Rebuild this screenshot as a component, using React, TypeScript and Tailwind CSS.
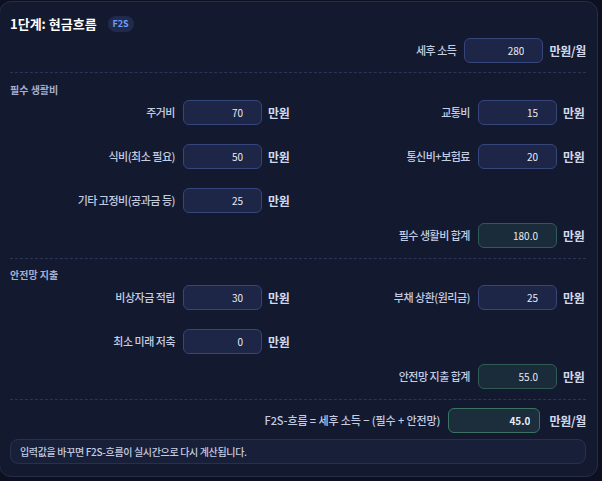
import { useState } from 'react';

type Tone = 'input' | 'total' | 'result';

interface FieldProps {
  label: string;
  value: string;
  unit?: string;
  tone?: Tone;
  onChange?: (v: string) => void;
}

const toneClass: Record<Tone, string> = {
  input: 'w-[79px] border-[#36457a] bg-[#1d2647] pr-[18px] font-normal',
  total: 'w-[79px] border-[#2e5c55] bg-[#1a2b39] pr-[18px] font-normal',
  result: 'w-[92px] border-[#3a7364] bg-[#1c2e3c] pr-[9px] font-bold',
};

function Field({ label, value, unit = '만원', tone = 'input', onChange }: FieldProps) {
  const isResult = tone === 'result';
  return (
    <div className="flex h-[25px] items-center justify-end">
      <span
        className={`mr-[8px] text-[11px] font-medium text-[#c4cce2] ${isResult ? 'tracking-[-0.1px]' : 'tracking-[-0.5px]'}`}
      >
        {label}
      </span>
      <input
        value={value}
        readOnly={tone !== 'input'}
        onChange={(e) => onChange?.(e.target.value)}
        className={`h-[25px] rounded-[6px] border text-right text-[10px] text-[#e8ecf6] outline-none ${toneClass[tone]}`}
      />
      <span
        className={`min-w-[23px] text-[12px] font-bold tracking-[-0.3px] text-[#d3d9ec] ${isResult ? 'ml-[9px]' : 'ml-[6px]'}`}
      >
        {unit}
      </span>
    </div>
  );
}

function SectionTitle({ children }: { children: string }) {
  return <div className="h-[15px] text-[10px] leading-[15px] font-bold text-[#a4afd3]">{children}</div>;
}

function Divider() {
  return <div className="border-t border-dashed border-[#2c3556]" />;
}

export default function App() {
  const [v, setV] = useState({
    income: '280',
    housing: '70',
    transport: '15',
    food: '50',
    telecom: '20',
    fixed: '25',
    emergency: '30',
    debt: '25',
    saving: '0',
  });
  const set = (k: keyof typeof v) => (x: string) => setV((p) => ({ ...p, [k]: x }));
  const n = (x: string) => Number(x) || 0;

  const essential = n(v.housing) + n(v.transport) + n(v.food) + n(v.telecom) + n(v.fixed);
  const safety = n(v.emergency) + n(v.debt) + n(v.saving);
  const f2s = n(v.income) - (essential + safety);

  return (
    <div className="min-h-screen bg-[#0c1020] pt-px font-['Noto_Sans_CJK_KR','Noto_Sans',sans-serif]">
      <div className="-ml-px w-[599px] rounded-[12px] border border-[#252d48] bg-[#131a30] pt-[12px] pb-[12px] pl-[10px] pr-[11px]">
        <div className="flex h-[20px] items-center gap-[11px]">
          <h1 className="text-[13px] font-bold text-white">1단계: 현금흐름</h1>
          <span className="flex h-[16px] w-[26px] items-center justify-center rounded-full bg-[#1f2a4c] text-[9px] font-bold text-[#6e9cff]">
            F2S
          </span>
        </div>

        <div className="mt-[4px]">
          <Field label="세후 소득" value={v.income} unit="만원/월" onChange={set('income')} />
        </div>

        <div className="mt-[9px]">
          <Divider />
        </div>

        <div className="pt-[9px]">
          <SectionTitle>필수 생활비</SectionTitle>
          <div className="mt-[3px] grid grid-cols-2 gap-x-[14px] gap-y-[19px]">
            <Field label="주거비" value={v.housing} onChange={set('housing')} />
            <Field label="교통비" value={v.transport} onChange={set('transport')} />
            <Field label="식비(최소 필요)" value={v.food} onChange={set('food')} />
            <Field label="통신비+보험료" value={v.telecom} onChange={set('telecom')} />
            <Field label="기타 고정비(공과금 등)" value={v.fixed} onChange={set('fixed')} />
          </div>
          <div className="mt-[10px]">
            <Field label="필수 생활비 합계" value={essential.toFixed(1)} tone="total" />
          </div>
        </div>

        <div className="mt-[10px]">
          <Divider />
        </div>

        <div className="pt-[8px]">
          <SectionTitle>안전망 지출</SectionTitle>
          <div className="mt-[3px] grid grid-cols-2 gap-x-[14px] gap-y-[19px]">
            <Field label="비상자금 적립" value={v.emergency} onChange={set('emergency')} />
            <Field label="부채 상환(원리금)" value={v.debt} onChange={set('debt')} />
            <Field label="최소 미래 저축" value={v.saving} onChange={set('saving')} />
          </div>
          <div className="mt-[10px]">
            <Field label="안전망 지출 합계" value={safety.toFixed(1)} tone="total" />
          </div>
        </div>

        <div className="mt-[10px]">
          <Divider />
        </div>

        <div className="mt-[8px]">
          <Field label="F2S-흐름 = 세후 소득 − (필수 + 안전망)" value={f2s.toFixed(1)} unit="만원/월" tone="result" />
        </div>

        <div className="mt-[6px] flex h-[25px] items-center rounded-[8px] border border-[#28304d] bg-[#182039] px-[9px] text-[10px] font-medium tracking-[-0.35px] text-[#c6cde2]">
          입력값을 바꾸면 F2S-흐름이 실시간으로 다시 계산됩니다.
        </div>
      </div>
    </div>
  );
}
